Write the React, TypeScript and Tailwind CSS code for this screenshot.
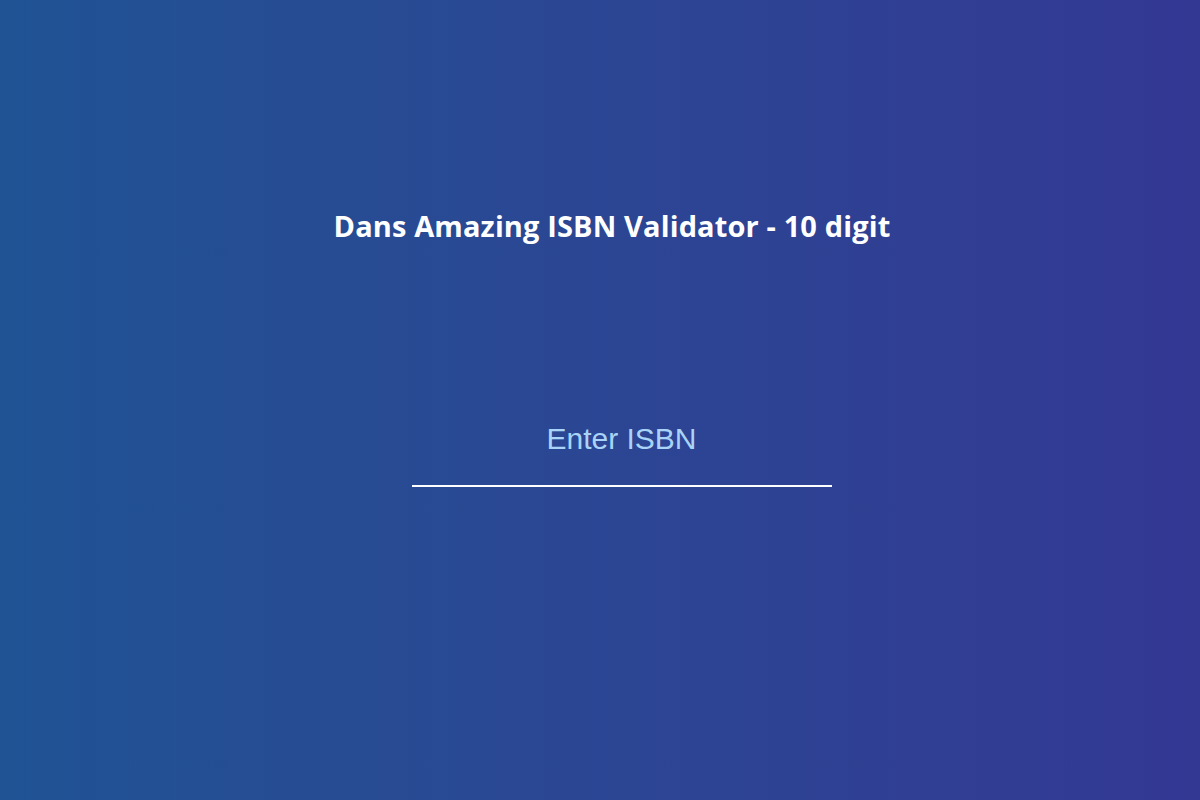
export default function App() {
  return (
    <div className="w-[1200px] h-[800px] bg-gradient-to-r from-[#1f5394] to-[#333893] flex flex-col items-center overflow-hidden">
      <h1 className="mt-[204px] ml-[24px] text-white font-bold text-[29px] leading-[44px] tracking-[0.13px] font-['Open_Sans',sans-serif]">
        Dans Amazing ISBN Validator - 10 digit
      </h1>
      <div className="mt-[170px] ml-[43px] w-[420px] border-b-2 border-white">
        <input
          placeholder="Enter ISBN"
          className="w-full bg-transparent text-center text-[30px] leading-[40px] pt-[1px] pb-[26px] text-white placeholder:text-[#a9d4f7] outline-none font-['Liberation_Sans',Arial,sans-serif]"
        />
      </div>
    </div>
  );
}
